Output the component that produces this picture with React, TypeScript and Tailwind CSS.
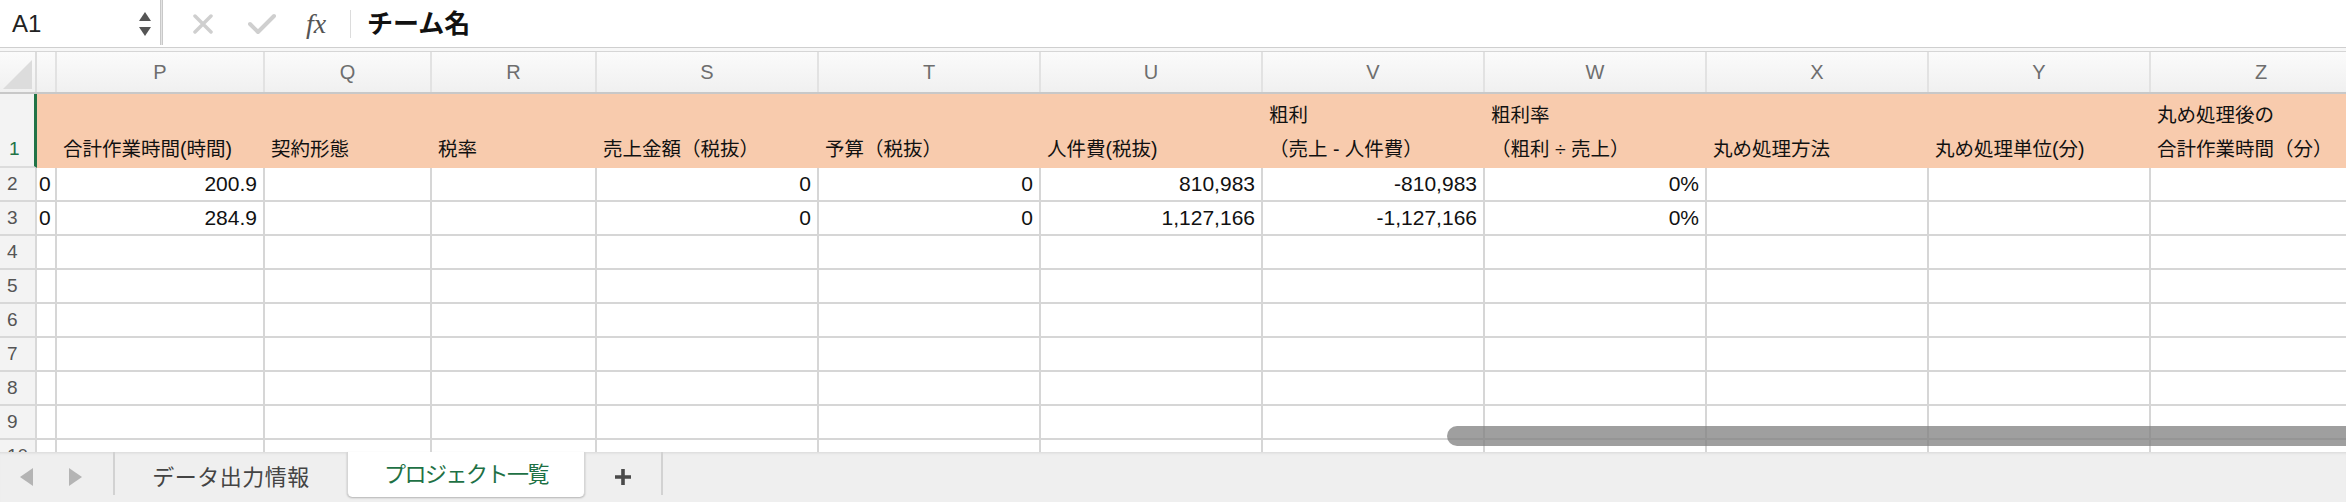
import { Fragment } from "react";

const font = "font-['Liberation_Sans','Noto_Sans_CJK_JP',sans-serif]";

// column widths taken from the sheet (O is the narrow one before P)
const columns = [
    { letter: "", w: "w-[20px]" },
    { letter: "P", w: "w-[208px]" },
    { letter: "Q", w: "w-[167px]" },
    { letter: "R", w: "w-[165px]" },
    { letter: "S", w: "w-[222px]" },
    { letter: "T", w: "w-[222px]" },
    { letter: "U", w: "w-[222px]" },
    { letter: "V", w: "w-[222px]" },
    { letter: "W", w: "w-[222px]" },
    { letter: "X", w: "w-[222px]" },
    { letter: "Y", w: "w-[222px]" },
    { letter: "Z", w: "w-[222px]" },
];

const headers: string[][] = [
    [],
    ["合計作業時間(時間)"],
    ["契約形態"],
    ["税率"],
    ["売上金額（税抜）"],
    ["予算（税抜）"],
    ["人件費(税抜)"],
    ["粗利", "（売上 - 人件費）"],
    ["粗利率", "（粗利 ÷ 売上）"],
    ["丸め処理方法"],
    ["丸め処理単位(分)"],
    ["丸め処理後の", "合計作業時間（分）"],
];

const dataRows: string[][] = [
    ["0", "200.9", "", "", "0", "0", "810,983", "-810,983", "0%", "", "", ""],
    ["0", "284.9", "", "", "0", "0", "1,127,166", "-1,127,166", "0%", "", "", ""],
];

function Toolbar() {
    return (
        <div className="flex h-[47px] items-center bg-white">
            <div className="flex h-full w-[160px] items-center justify-between pl-[12px] pr-[8px]">
                <span className="text-[24px] leading-none text-[#222]">A1</span>
                <svg width="14" height="32" viewBox="0 0 14 32">
                    <polygon points="7,4 13,13 1,13" fill="#555" />
                    <polygon points="1,19 13,19 7,28" fill="#555" />
                </svg>
            </div>
            <div className="h-[45px] w-[3px] self-start border-x border-[#c9c9c9] bg-[#e4e4e4]" />
            <svg className="ml-[30px]" width="20" height="20" viewBox="0 0 20 20">
                <path d="M2 2 L18 18 M18 2 L2 18" stroke="#cfcfcf" strokeWidth="3.5" strokeLinecap="round" />
            </svg>
            <svg className="ml-[35px]" width="28" height="22" viewBox="0 0 28 22">
                <path d="M2 11 L10 19 L26 3" stroke="#cfcfcf" strokeWidth="4" fill="none" strokeLinecap="round" strokeLinejoin="round" />
            </svg>
            <span className="ml-[30px] w-[30px] font-['Liberation_Serif',serif] text-[28px] italic leading-none text-[#555]">
                fx
            </span>
            <div className="ml-[14px] h-[28px] w-px bg-[#dcdcdc]" />
            <span className="ml-[16px] text-[26px] font-semibold leading-none text-[#111]">チーム名</span>
        </div>
    );
}

function ColumnHeader() {
    return (
        <div className="flex h-[42px] border-b-2 border-[#c8c8c8] bg-gradient-to-b from-[#fbfbfb] to-[#f0f0f0]">
            <div className="flex w-[37px] shrink-0 items-end border-r-2 border-[#dcdcdc] pb-[2px] pl-[3px]">
                <svg width="30" height="31" viewBox="0 0 30 31">
                    <polygon points="29,1 29,30 0,30" fill="#dcdcdc" />
                </svg>
            </div>
            {columns.map((c, i) => (
                <div
                    key={i}
                    className={`${c.w} flex shrink-0 items-center justify-center border-r-2 border-[#e2e2e2] text-[20px] text-[#6e6e6e]`}
                >
                    {c.letter}
                </div>
            ))}
        </div>
    );
}

function Grid() {
    const emptyRows = [4, 5, 6, 7, 8, 9, 10];

    return (
        <div className="relative h-[358px] overflow-hidden">
            {/* Row 1 - header fill */}
            <div className="flex h-[74px]">
                <div className="flex w-[37px] shrink-0 items-end border-b-2 border-r-[3px] border-b-[#dcdcdc] border-r-[#217346] bg-[#f3f3f3] pl-[9px] text-[19px] leading-[34px] text-[#217346]">
                    1
                </div>
                {columns.map((c, i) => (
                    <div
                        key={i}
                        className={`${c.w} flex shrink-0 flex-col justify-end border-b-2 border-[#f8cbad] bg-[#f8cbad] pl-[6px] text-[19.5px] leading-[34px] text-[#111] whitespace-nowrap`}
                    >
                        {headers[i].map((line, j) => (
                            <span key={j}>{line}</span>
                        ))}
                    </div>
                ))}
            </div>

            {/* Data rows */}
            {dataRows.map((row, r) => (
                <div key={r} className="flex h-[34px]">
                    <div className="flex w-[37px] shrink-0 items-center border-b-2 border-r-2 border-[#d8d8d8] bg-[#f3f3f3] pl-[7px] text-[19px] text-[#555]">
                        {r + 2}
                    </div>
                    {columns.map((c, i) => (
                        <div
                            key={i}
                            className={`${c.w} flex shrink-0 items-center border-b-2 border-r-2 border-[#d6d6d6] text-[21px] text-[#111] ${
                                i === 0 ? "justify-start pl-[2px]" : "justify-end pr-[6px]"
                            }`}
                        >
                            {row[i]}
                        </div>
                    ))}
                </div>
            ))}

            {emptyRows.map((n) => (
                <Fragment key={n}>
                    <div className="flex h-[34px]">
                        <div className="flex w-[37px] shrink-0 items-center border-b-2 border-r-2 border-[#d8d8d8] bg-[#f3f3f3] pl-[7px] text-[19px] text-[#555]">
                            {n}
                        </div>
                        {columns.map((c, i) => (
                            <div key={i} className={`${c.w} shrink-0 border-b-2 border-r-2 border-[#d6d6d6]`} />
                        ))}
                    </div>
                </Fragment>
            ))}

            {/* horizontal scrollbar overlay */}
            <div className="absolute left-[1447px] top-[332px] h-[20px] w-[950px] rounded-full bg-[#7f7f7f]/75" />
        </div>
    );
}

function SheetTabs() {
    return (
        <div className="flex h-[50px] bg-[#efefef] shadow-[inset_0_3px_3px_-2px_rgba(0,0,0,0.1)]">
            <div className="flex w-[113px] items-center">
                <svg width="113" height="20" viewBox="0 0 113 20">
                    <polygon points="20,10 33,1 33,19" fill="#b4b4b4" />
                    <polygon points="69,1 82,10 69,19" fill="#b4b4b4" />
                </svg>
            </div>
            <div className="h-[43px] w-[2px] bg-[#d2d2d2]" />
            <div className="flex w-[232px] items-center justify-center text-[22px] tracking-[0.5px] text-[#444]">
                データ出力情報
            </div>
            <div className="flex h-[45px] w-[238px] items-center justify-center rounded-b-[5px] border-x border-[#d6d6d6] bg-white text-[22px] tracking-[-1.5px] text-[#1e7145] shadow-[0_1px_2px_rgba(0,0,0,0.25)]">
                プロジェクト一覧
            </div>
            <div className="flex w-[76px] items-center justify-center">
                <svg width="18" height="18" viewBox="0 0 18 18">
                    <path d="M9 1 V17 M1 9 H17" stroke="#4a4a4a" strokeWidth="3.6" />
                </svg>
            </div>
            <div className="h-[43px] w-[2px] bg-[#d2d2d2]" />
        </div>
    );
}

export default function App() {
    return (
        <div className={`${font} h-[502px] w-[2346px] overflow-hidden bg-white`}>
            <Toolbar />
            <div className="h-[5px] border-y border-t-[#cfcfcf] border-b-[#d6d6d6] bg-[#f7f7f7]" />
            <ColumnHeader />
            <Grid />
            <SheetTabs />
        </div>
    );
}
